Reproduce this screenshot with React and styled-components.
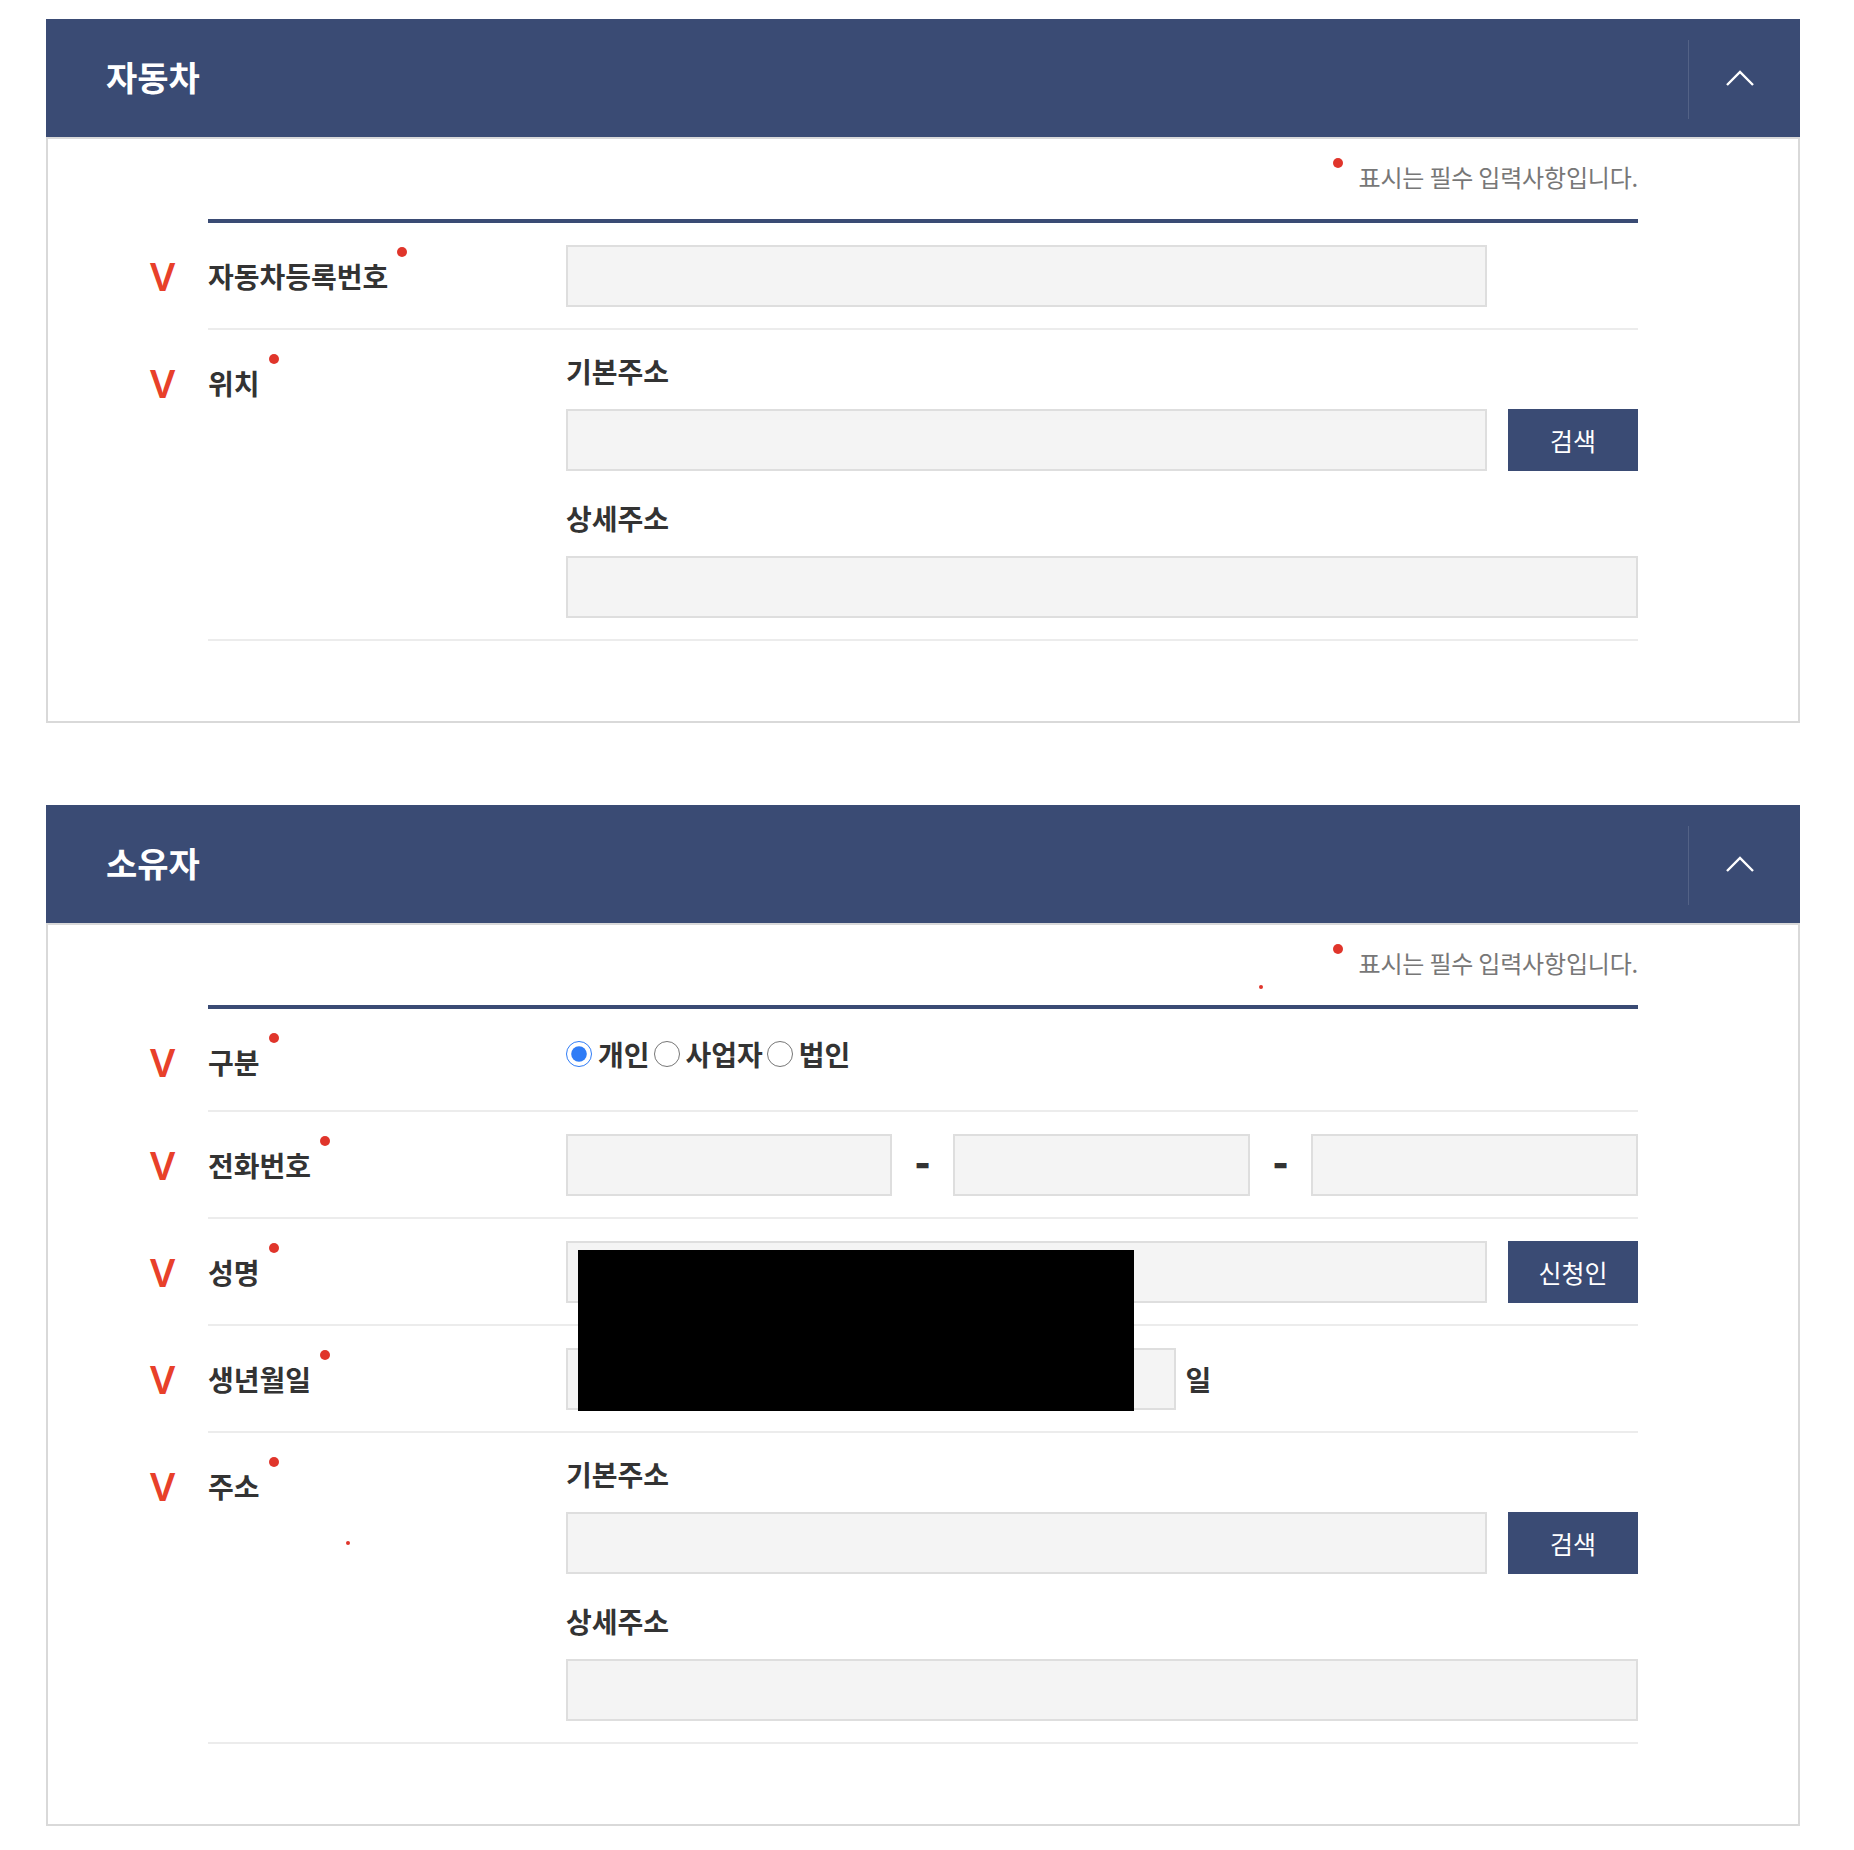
import React from "react";
import styled, { createGlobalStyle } from "styled-components";

const GlobalStyle = createGlobalStyle`
body {
  margin: 0;
  background: #ffffff;
  font-family: "Noto Sans CJK KR", "Noto Sans", sans-serif;
  color: #333333;
}
* { box-sizing: border-box; }
`;

const NAVY = "#3a4b74";

const Page = styled.div`
padding: 19px 54px 40px 46px;
display: flex;
flex-direction: column;
gap: 82px;
`;

const Card = styled.section`
display: flex;
flex-direction: column;
`;

const Header = styled.div`
height: 118px;
background: ${NAVY};
display: flex;
align-items: center;
justify-content: space-between;
`;

const Title = styled.h2`
margin: 0 0 3px;
padding-left: 60px;
font-size: 34px;
font-weight: 700;
letter-spacing: 0;
color: #ffffff;
`;

const Toggle = styled.button`
width: 112px;
height: 79px;
margin-top: 2px;
border: none;
border-left: 1px solid rgba(255, 255, 255, 0.13);
background: transparent;
display: flex;
align-items: center;
justify-content: center;
padding: 0 10px 2px 0;
`;

const Body = styled.div`
position: relative;
border: 2px solid #d9d9d9;
padding: 23px 160px 80px;
`;

const Note = styled.div`
display: flex;
justify-content: flex-end;
align-items: flex-start;
height: 30px;
line-height: 30px;
font-size: 24px;
letter-spacing: -0.2px;
color: #777777;
margin-bottom: 27px;
`;

const NoteDot = styled.span`
width: 10px;
height: 10px;
border-radius: 50%;
background: #e0352b;
margin: -4px 16px 0 0;
`;

const Form = styled.div`
border-top: 4px solid ${NAVY};
`;

const Row = styled.div`
display: flex;
margin-left: -58px;
`;

const Mark = styled.div`
width: 58px;
flex: none;
padding-top: 22px;
line-height: 62px;
font-family: "Noto Sans", sans-serif;
font-size: 40px;
font-weight: 600;
color: #e8402a;
`;

const RowBody = styled.div`
flex: 1;
display: flex;
border-bottom: 2px solid #ececec;
padding: 22px 0 ${(p) => (p.$tight ? "17px" : "21px")};
`;

const Label = styled.div`
width: 358px;
flex: none;
display: flex;
align-items: flex-start;
height: 62px;
line-height: 62px;
font-size: 28px;
font-weight: 700;
color: #333333;
`;

const RequiredDot = styled.span`
width: 10px;
height: 10px;
border-radius: 50%;
background: #e0352b;
margin: 2px 0 0 9px;
`;

const Field = styled.div`
flex: 1;
min-width: 0;
display: flex;
flex-direction: column;
`;

const SubLabel = styled.div`
line-height: 38px;
font-size: 28px;
font-weight: 700;
margin-top: ${(p) => (p.$first ? "0" : "28px")};
margin-bottom: 19px;
`;

const Line = styled.div`
display: flex;
align-items: center;
gap: ${(p) => p.$gap || "21px"};
`;

const Input = styled.input`
height: 62px;
width: ${(p) => p.$w || "auto"};
flex: ${(p) => (p.$w ? "none" : "1")};
min-width: 0;
border: 2px solid #dedede;
background: #f4f4f4;
outline: none;
padding: 0 14px;
font-size: 24px;
font-family: inherit;
`;

const Button = styled.button`
width: 130px;
height: 62px;
flex: none;
border: none;
background: ${NAVY};
color: #ffffff;
font-family: inherit;
font-size: 25px;
font-weight: 400;
`;

const Dash = styled.span`
width: 61px;
height: 62px;
flex: none;
text-align: center;
font-size: 42px;
font-weight: 900;
color: #333333;
line-height: 52px;
`;

const Unit = styled.span`
font-size: 28px;
font-weight: 700;
flex: none;
`;

const Radios = styled.div`
display: flex;
align-items: center;
height: 46px;
font-size: 28px;
font-weight: 700;
`;

const RadioItem = styled.label`
display: flex;
align-items: center;
margin-right: 4px;
`;

const Radio = styled.input`
width: 26px;
height: 26px;
margin: 0 6px 0 0;
accent-color: #2f7cf6;
`;

const Redaction = styled.div`
position: absolute;
left: 530px;
top: 325px;
width: 556px;
height: 161px;
background: #000000;
`;

const Speck = styled.span`
position: absolute;
left: ${(p) => p.$x}px;
top: ${(p) => p.$y}px;
width: ${(p) => p.$s}px;
height: ${(p) => p.$s}px;
border-radius: 50%;
background: #e0352b;
`;

const Chevron = () => (
  <svg width="30" height="16" viewBox="0 0 30 16">
    <polyline points="2,15 15,2 28,15" fill="none" stroke="#ffffff" strokeWidth="2.4" />
  </svg>
);

const FormRow = ({ label, tight, children }) => (
  <Row>
    <Mark>V</Mark>
    <RowBody $tight={tight}>
      <Label>
        {label}
        <RequiredDot />
      </Label>
      <Field>{children}</Field>
    </RowBody>
  </Row>
);

const AddressFields = () => (
  <>
    <SubLabel $first>기본주소</SubLabel>
    <Line>
      <Input />
      <Button>검색</Button>
    </Line>
    <SubLabel>상세주소</SubLabel>
    <Line>
      <Input />
    </Line>
  </>
);

const Section = ({ title, children }) => (
  <Card>
    <Header>
      <Title>{title}</Title>
      <Toggle>
        <Chevron />
      </Toggle>
    </Header>
    {children}
  </Card>
);

export default function App() {
  return (
    <>
      <GlobalStyle />
      <Page>
        <Section title="자동차">
          <Body>
            <Note>
              <NoteDot />
              표시는 필수 입력사항입니다.
            </Note>
            <Form>
              <FormRow label="자동차등록번호">
                <Line>
                  <Input $w="921px" />
                </Line>
              </FormRow>
              <FormRow label="위치">
                <AddressFields />
              </FormRow>
            </Form>
          </Body>
        </Section>

        <Section title="소유자">
          <Body>
            <Note>
              <NoteDot />
              표시는 필수 입력사항입니다.
            </Note>
            <Form>
              <FormRow label="구분" tight>
                <Radios>
                  <RadioItem>
                    <Radio type="radio" name="kind" defaultChecked />
                    개인
                  </RadioItem>
                  <RadioItem>
                    <Radio type="radio" name="kind" />
                    사업자
                  </RadioItem>
                  <RadioItem>
                    <Radio type="radio" name="kind" />
                    법인
                  </RadioItem>
                </Radios>
              </FormRow>
              <FormRow label="전화번호">
                <Line $gap="0">
                  <Input $w="326px" />
                  <Dash>-</Dash>
                  <Input $w="297px" />
                  <Dash>-</Dash>
                  <Input />
                </Line>
              </FormRow>
              <FormRow label="성명">
                <Line>
                  <Input />
                  <Button>신청인</Button>
                </Line>
              </FormRow>
              <FormRow label="생년월일">
                <Line $gap="10px">
                  <Input $w="180px" />
                  <Unit>년</Unit>
                  <Input $w="150px" />
                  <Unit>월</Unit>
                  <Input $w="188px" />
                  <Unit>일</Unit>
                </Line>
              </FormRow>
              <FormRow label="주소">
                <AddressFields />
              </FormRow>
            </Form>
            <Redaction />
            <Speck $x={1211} $y={60} $s={4} />
            <Speck $x={298} $y={616} $s={4} />
          </Body>
        </Section>
      </Page>
    </>
  );
}
